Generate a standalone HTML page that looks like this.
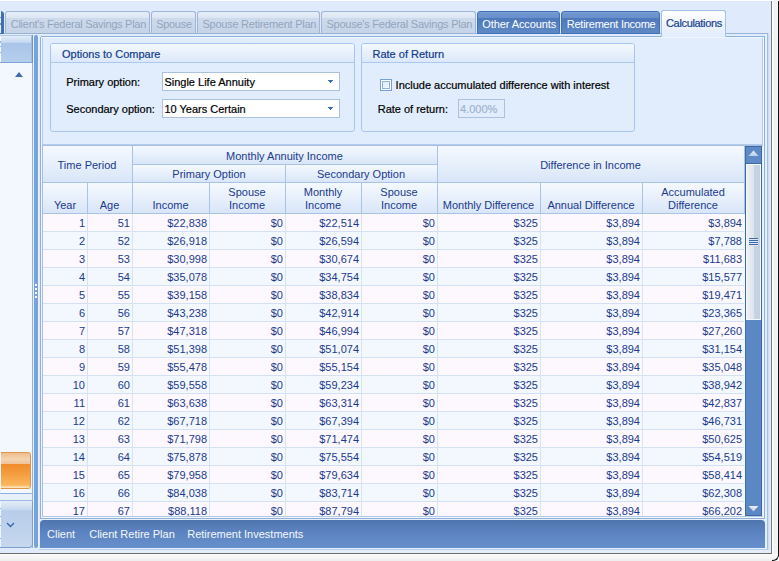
<!DOCTYPE html>
<html><head><meta charset="utf-8"><style>
html,body{margin:0;padding:0}
body{width:779px;height:561px;position:relative;overflow:hidden;background:#ffffff;font-family:"Liberation Sans",sans-serif;font-size:11px}
div{position:absolute}
svg{position:absolute}
.t{position:absolute;white-space:nowrap;line-height:13px;font-size:11px;-webkit-text-stroke-width:0.2px}
</style></head><body>
<div style="left:0px;top:0px;width:771px;height:553px;background:#dfebfc"></div>
<div style="left:0px;top:0px;width:771px;height:1px;background:#ffffff"></div>
<div style="left:771px;top:1px;width:1px;height:553px;background:#7a7a7a"></div>
<div style="left:772px;top:0px;width:6px;height:561px;background:linear-gradient(90deg,#ffffff,#ffffff 16%,#eef0f3 32%,#f1f3f5 85%,#fafafa)"></div>
<div style="left:778px;top:1px;width:1px;height:553px;background:#111"></div>
<div style="left:0px;top:553px;width:772px;height:1px;background:#6e6e6e"></div>
<div style="left:0px;top:554px;width:778px;height:7px;background:linear-gradient(#fbfbfb,#f4f4f4 60%,#eeeeee)"></div>
<div style="left:772px;top:548px;width:7px;height:13px;border-right:1.5px solid #111;border-bottom:1.5px solid #111;border-bottom-right-radius:6px;box-sizing:border-box;background:transparent"></div>
<div style="left:39px;top:34px;width:732px;height:519px;background:#e1edfc"></div>
<div style="left:39px;top:36px;width:1px;height:513px;background:#dfeafa"></div>
<div style="left:40px;top:37px;width:1px;height:482px;background:#8fb0dc"></div>
<div style="left:41px;top:36px;width:724px;height:1px;background:#8eb0de"></div>
<div style="left:40px;top:518px;width:725px;height:1px;background:#8fb0dc"></div>
<div style="left:764px;top:36px;width:1px;height:483px;background:#8fb0dc"></div>
<div style="left:41px;top:37px;width:1px;height:481px;background:#f0f6fe"></div>
<div style="left:41px;top:37px;width:723px;height:1px;background:#f0f6fe"></div>
<div style="left:41px;top:517px;width:723px;height:1px;background:#f0f6fe"></div>
<div style="left:763px;top:37px;width:1px;height:481px;background:#f0f6fe"></div>
<div style="left:40px;top:519px;width:725px;height:1px;background:#e6effa"></div>
<div style="left:765px;top:33px;width:2px;height:517px;background:#e6f0fc"></div>
<div style="left:767px;top:33px;width:1px;height:517px;background:#9fc0ea"></div>
<div style="left:768px;top:33px;width:2px;height:520px;background:linear-gradient(90deg,#c9daef,#dde9f8)"></div>
<div style="left:770px;top:33px;width:1px;height:520px;background:#e3eefb"></div>
<div style="left:39px;top:548px;width:728px;height:1px;background:#e8f0fa"></div>
<div style="left:39px;top:549px;width:729px;height:1px;background:#b5cdee"></div>
<div style="left:39px;top:550px;width:731px;height:3px;background:#e4edf8"></div>
<div style="left:0px;top:33px;width:661px;height:1px;background:#98b2d4"></div>
<div style="left:726px;top:33px;width:42px;height:1px;background:#98b2d4"></div>
<div style="left:-19px;top:11px;width:23px;height:23px;border-radius:0 3px 0 0;background:linear-gradient(90deg,#4f7bbd,#5a85c5 70%,#3f6cb0);border:1px solid #3f6cb0;box-sizing:border-box"></div>
<div style="left:0px;top:11px;width:1px;height:22px;background:#e6effb"></div>
<div style="left:0px;top:17px;width:1px;height:1px;background:#6f95cc"></div>
<div style="left:0px;top:23px;width:1px;height:2px;background:#6f95cc"></div>
<div style="left:5px;top:11px;width:145px;height:23px;box-sizing:border-box;border-radius:3px 3px 0 0;background:linear-gradient(#e6eef8,#dce5f2 28%,#cddaec 29%,#c6d4e8);border:1px solid #a0b5d3;border-bottom-color:#98b2d4;"></div>
<span class="t" style="left:10.8px;top:17.7px;color:#93a5bd;-webkit-text-stroke-width:0;letter-spacing:-0.28px">Client's Federal Savings Plan</span>
<div style="left:151px;top:11px;width:45px;height:23px;box-sizing:border-box;border-radius:3px 3px 0 0;background:linear-gradient(#e6eef8,#dce5f2 28%,#cddaec 29%,#c6d4e8);border:1px solid #a0b5d3;border-bottom-color:#98b2d4;"></div>
<span class="t" style="left:156.2px;top:17.7px;color:#93a5bd;-webkit-text-stroke-width:0;letter-spacing:-0.3px">Spouse</span>
<div style="left:197px;top:11px;width:123px;height:23px;box-sizing:border-box;border-radius:3px 3px 0 0;background:linear-gradient(#e6eef8,#dce5f2 28%,#cddaec 29%,#c6d4e8);border:1px solid #a0b5d3;border-bottom-color:#98b2d4;"></div>
<span class="t" style="left:202.5px;top:17.7px;color:#93a5bd;-webkit-text-stroke-width:0;letter-spacing:-0.25px">Spouse Retirement Plan</span>
<div style="left:321px;top:11px;width:155px;height:23px;box-sizing:border-box;border-radius:3px 3px 0 0;background:linear-gradient(#e6eef8,#dce5f2 28%,#cddaec 29%,#c6d4e8);border:1px solid #a0b5d3;border-bottom-color:#98b2d4;"></div>
<span class="t" style="left:326.4px;top:17.7px;color:#93a5bd;-webkit-text-stroke-width:0;letter-spacing:-0.23px">Spouse's Federal Savings Plan</span>
<div style="left:477px;top:11px;width:83px;height:23px;box-sizing:border-box;border-radius:3px 3px 0 0;background:linear-gradient(#86a8d9,#7097cf 5%,#6890cc 28%,#4e78ba 29%,#5f88c6);border:1px solid #4070b5;"></div>
<span class="t" style="left:482.3px;top:17.7px;color:#ffffff;-webkit-text-stroke-width:0;letter-spacing:-0.1px">Other Accounts</span>
<div style="left:561px;top:11px;width:99px;height:23px;box-sizing:border-box;border-radius:3px 3px 0 0;background:linear-gradient(#86a8d9,#7097cf 5%,#6890cc 28%,#4e78ba 29%,#5f88c6);border:1px solid #4070b5;"></div>
<span class="t" style="left:566.8px;top:17.7px;color:#ffffff;-webkit-text-stroke-width:0;letter-spacing:-0.25px">Retirement Income</span>
<div style="left:661px;top:10px;width:65px;height:27px;box-sizing:border-box;border:1px solid #a3c0e8;border-bottom:none;border-radius:3px 3px 0 0;background:linear-gradient(#ffffff,#eef4fd 50%,#e1edfc)"></div>
<span class="t" style="left:666px;top:16.8px;color:#15428b;letter-spacing:-0.33px">Calculations</span>
<div style="left:0px;top:35px;width:32px;height:513px;background:#f3f8fe"></div>
<div style="left:32px;top:35px;width:1px;height:513px;background:#8fb3e3"></div>
<div style="left:0px;top:35px;width:32px;height:1px;background:#b5c9e4"></div>
<div style="left:0px;top:36px;width:32px;height:27px;background:linear-gradient(#e4edf9,#c2d6ef 25%,#a8c4e8 26%,#b6cfec)"></div>
<div style="left:0px;top:62px;width:32px;height:1px;background:#7fa3d3"></div>
<div style="left:31px;top:36px;width:1px;height:26px;background:#9fbde3"></div>
<div style="left:32px;top:35px;width:1px;height:28px;background:#7097c8"></div>
<div style="left:15px;top:72px;width:0;height:0;border-left:4px solid transparent;border-right:4px solid transparent;border-bottom:5px solid #3c6cb4;position:absolute"></div>
<div style="left:-3px;top:452px;width:34px;height:37px;box-sizing:border-box;border:1px solid #e0954a;border-radius:3px;background:linear-gradient(#eebd8c,#f5d3b0 18%,#f0c398 31%,#f18b2b 32%,#f39a3a 55%,#fbb75c 92%,#fde3b8 98%)"></div>
<div style="left:0px;top:452px;width:1px;height:37px;background:#f6f9fe"></div>
<div style="left:0px;top:493px;width:32px;height:1px;background:#90b0e0"></div>
<div style="left:0px;top:494px;width:32px;height:7px;background:#e8f0fa"></div>
<div style="left:0px;top:500px;width:32px;height:1px;background:#9bb9e4"></div>
<div style="left:-3px;top:501px;width:36px;height:47px;box-sizing:border-box;border:1px solid #7d9fcf;border-top:none;border-radius:0 0 4px 0;background:linear-gradient(#e4edf8,#c6d8ee 20%,#b8cdea 21%,#c6d7ee)"></div>
<svg style="position:absolute;left:6px;top:522px" width="9" height="6"><path d="M1 1 L4.5 4.5 L8 1" stroke="#3565ad" stroke-width="1.35" fill="none"/></svg>
<div style="left:0px;top:36px;width:1px;height:26px;background:#f4f8fe"></div>
<div style="left:0px;top:41px;width:1px;height:2px;background:#8fb0dc"></div>
<div style="left:0px;top:46px;width:1px;height:1px;background:#8fb0dc"></div>
<div style="left:0px;top:52px;width:1px;height:1px;background:#8fb0dc"></div>
<div style="left:0px;top:501px;width:1px;height:46px;background:#eef4fc"></div>
<div style="left:0px;top:508px;width:1px;height:1px;background:#8fb0dc"></div>
<div style="left:0px;top:516px;width:1px;height:1px;background:#8fb0dc"></div>
<div style="left:0px;top:525px;width:1px;height:1px;background:#8fb0dc"></div>
<div style="left:0px;top:538px;width:1px;height:1px;background:#8fb0dc"></div>
<div style="left:33px;top:35px;width:1px;height:514px;background:#e8f0fb"></div>
<div style="left:34px;top:35px;width:4px;height:513px;background:#78a2dc;border-radius:2px"></div>
<div style="left:38px;top:35px;width:1px;height:514px;background:#eaf2fd"></div>
<div style="left:35px;top:284px;width:2px;height:2px;background:#ffffff"></div>
<div style="left:35px;top:288px;width:2px;height:2px;background:#ffffff"></div>
<div style="left:35px;top:292px;width:2px;height:2px;background:#ffffff"></div>
<div style="left:35px;top:296px;width:2px;height:2px;background:#ffffff"></div>
<div style="left:42px;top:38px;width:1px;height:106px;background:#b0cdf0"></div>
<div style="left:762px;top:38px;width:1px;height:106px;background:#b0cdf0"></div>
<div style="left:42px;top:144px;width:721px;height:1px;background:#b0cdf0"></div>
<div style="left:42px;top:145px;width:721px;height:1px;background:#a9bedb"></div>
<div style="left:50px;top:43px;width:305px;height:89px;box-sizing:border-box;border:1px solid #a6c6ef;border-radius:3px;background:#e1edfc"></div>
<div style="left:51px;top:44px;width:303px;height:18px;background:linear-gradient(#f3f8fe,#dce8fa);border-radius:2px 2px 0 0"></div>
<div style="left:51px;top:62px;width:303px;height:1px;background:#a9c9f0"></div>
<span class="t" style="left:62px;top:48px;color:#123c8c">Options to Compare</span>
<div style="left:361px;top:43px;width:274px;height:89px;box-sizing:border-box;border:1px solid #a6c6ef;border-radius:3px;background:#e1edfc"></div>
<div style="left:362px;top:44px;width:272px;height:18px;background:linear-gradient(#f3f8fe,#dce8fa);border-radius:2px 2px 0 0"></div>
<div style="left:362px;top:62px;width:272px;height:1px;background:#a9c9f0"></div>
<span class="t" style="left:372.5px;top:48px;color:#123c8c">Rate of Return</span>
<span class="t" style="left:66.2px;top:75.5px;color:#000">Primary option:</span>
<span class="t" style="left:66.2px;top:102.5px;color:#000">Secondary option:</span>
<div style="left:162px;top:72px;width:178px;height:19px;box-sizing:border-box;border:1px solid #abc1de;background:#fff"></div>
<span class="t" style="left:164.4px;top:76px;color:#000">Single Life Annuity</span>
<div style="left:328px;top:80px;width:5px;height:1px;background:#3d6cb3"></div>
<div style="left:329px;top:81px;width:3px;height:1px;background:#3d6cb3"></div>
<div style="left:330px;top:82px;width:1px;height:1px;background:#3d6cb3"></div>
<div style="left:162px;top:99px;width:178px;height:19px;box-sizing:border-box;border:1px solid #abc1de;background:#fff"></div>
<span class="t" style="left:164.4px;top:103px;color:#000">10 Years Certain</span>
<div style="left:328px;top:107px;width:5px;height:1px;background:#3d6cb3"></div>
<div style="left:329px;top:108px;width:3px;height:1px;background:#3d6cb3"></div>
<div style="left:330px;top:109px;width:1px;height:1px;background:#3d6cb3"></div>
<div style="left:380px;top:79px;width:12px;height:12px;box-sizing:border-box;border:1px solid #74a0d8;background:#ffffff"></div>
<div style="left:382px;top:81px;width:8px;height:8px;box-sizing:border-box;border:1px solid #93b2dc;background:linear-gradient(135deg,#dfe8f5,#f4f8fd)"></div>
<span class="t" style="left:395.6px;top:79px;color:#000">Include accumulated difference with interest</span>
<span class="t" style="left:377.7px;top:103px;color:#000">Rate of return:</span>
<div style="left:458px;top:99px;width:47px;height:19px;box-sizing:border-box;border:1px solid #abc1de;background:#e1edfc"></div>
<span class="t" style="left:460px;top:102.5px;color:#a0b4d0">4.000%</span>
<div style="left:42px;top:146px;width:703px;height:370px;background:#f3f8fe"></div>
<div style="left:43px;top:214px;width:701px;height:17px;background:#fcf8fd"></div>
<div style="left:43px;top:231px;width:701px;height:1px;background:#d3e1f3"></div>
<div style="left:87px;top:214px;width:1px;height:18px;background:#d6e4f5"></div>
<div style="left:132px;top:214px;width:1px;height:18px;background:#d6e4f5"></div>
<div style="left:209px;top:214px;width:1px;height:18px;background:#d6e4f5"></div>
<div style="left:285px;top:214px;width:1px;height:18px;background:#d6e4f5"></div>
<div style="left:361px;top:214px;width:1px;height:18px;background:#d6e4f5"></div>
<div style="left:437px;top:214px;width:1px;height:18px;background:#d6e4f5"></div>
<div style="left:540px;top:214px;width:1px;height:18px;background:#d6e4f5"></div>
<div style="left:642px;top:214px;width:1px;height:18px;background:#d6e4f5"></div>
<span class="t" style="right:694px;top:216.9px;color:#1b3a8e;-webkit-text-stroke-width:0">1</span>
<span class="t" style="right:649px;top:216.9px;color:#1b3a8e;-webkit-text-stroke-width:0">51</span>
<span class="t" style="right:572px;top:216.9px;color:#1b3a8e;-webkit-text-stroke-width:0">$22,838</span>
<span class="t" style="right:496px;top:216.9px;color:#1b3a8e;-webkit-text-stroke-width:0">$0</span>
<span class="t" style="right:420px;top:216.9px;color:#1b3a8e;-webkit-text-stroke-width:0">$22,514</span>
<span class="t" style="right:344px;top:216.9px;color:#1b3a8e;-webkit-text-stroke-width:0">$0</span>
<span class="t" style="right:241px;top:216.9px;color:#1b3a8e;-webkit-text-stroke-width:0">$325</span>
<span class="t" style="right:139px;top:216.9px;color:#1b3a8e;-webkit-text-stroke-width:0">$3,894</span>
<span class="t" style="right:37px;top:216.9px;color:#1b3a8e;-webkit-text-stroke-width:0">$3,894</span>
<div style="left:43px;top:232px;width:701px;height:17px;background:#f3f8fe"></div>
<div style="left:43px;top:249px;width:701px;height:1px;background:#d3e1f3"></div>
<div style="left:87px;top:232px;width:1px;height:18px;background:#d6e4f5"></div>
<div style="left:132px;top:232px;width:1px;height:18px;background:#d6e4f5"></div>
<div style="left:209px;top:232px;width:1px;height:18px;background:#d6e4f5"></div>
<div style="left:285px;top:232px;width:1px;height:18px;background:#d6e4f5"></div>
<div style="left:361px;top:232px;width:1px;height:18px;background:#d6e4f5"></div>
<div style="left:437px;top:232px;width:1px;height:18px;background:#d6e4f5"></div>
<div style="left:540px;top:232px;width:1px;height:18px;background:#d6e4f5"></div>
<div style="left:642px;top:232px;width:1px;height:18px;background:#d6e4f5"></div>
<span class="t" style="right:694px;top:234.9px;color:#1b3a8e;-webkit-text-stroke-width:0">2</span>
<span class="t" style="right:649px;top:234.9px;color:#1b3a8e;-webkit-text-stroke-width:0">52</span>
<span class="t" style="right:572px;top:234.9px;color:#1b3a8e;-webkit-text-stroke-width:0">$26,918</span>
<span class="t" style="right:496px;top:234.9px;color:#1b3a8e;-webkit-text-stroke-width:0">$0</span>
<span class="t" style="right:420px;top:234.9px;color:#1b3a8e;-webkit-text-stroke-width:0">$26,594</span>
<span class="t" style="right:344px;top:234.9px;color:#1b3a8e;-webkit-text-stroke-width:0">$0</span>
<span class="t" style="right:241px;top:234.9px;color:#1b3a8e;-webkit-text-stroke-width:0">$325</span>
<span class="t" style="right:139px;top:234.9px;color:#1b3a8e;-webkit-text-stroke-width:0">$3,894</span>
<span class="t" style="right:37px;top:234.9px;color:#1b3a8e;-webkit-text-stroke-width:0">$7,788</span>
<div style="left:43px;top:250px;width:701px;height:17px;background:#fcf8fd"></div>
<div style="left:43px;top:267px;width:701px;height:1px;background:#d3e1f3"></div>
<div style="left:87px;top:250px;width:1px;height:18px;background:#d6e4f5"></div>
<div style="left:132px;top:250px;width:1px;height:18px;background:#d6e4f5"></div>
<div style="left:209px;top:250px;width:1px;height:18px;background:#d6e4f5"></div>
<div style="left:285px;top:250px;width:1px;height:18px;background:#d6e4f5"></div>
<div style="left:361px;top:250px;width:1px;height:18px;background:#d6e4f5"></div>
<div style="left:437px;top:250px;width:1px;height:18px;background:#d6e4f5"></div>
<div style="left:540px;top:250px;width:1px;height:18px;background:#d6e4f5"></div>
<div style="left:642px;top:250px;width:1px;height:18px;background:#d6e4f5"></div>
<span class="t" style="right:694px;top:252.89999999999998px;color:#1b3a8e;-webkit-text-stroke-width:0">3</span>
<span class="t" style="right:649px;top:252.89999999999998px;color:#1b3a8e;-webkit-text-stroke-width:0">53</span>
<span class="t" style="right:572px;top:252.89999999999998px;color:#1b3a8e;-webkit-text-stroke-width:0">$30,998</span>
<span class="t" style="right:496px;top:252.89999999999998px;color:#1b3a8e;-webkit-text-stroke-width:0">$0</span>
<span class="t" style="right:420px;top:252.89999999999998px;color:#1b3a8e;-webkit-text-stroke-width:0">$30,674</span>
<span class="t" style="right:344px;top:252.89999999999998px;color:#1b3a8e;-webkit-text-stroke-width:0">$0</span>
<span class="t" style="right:241px;top:252.89999999999998px;color:#1b3a8e;-webkit-text-stroke-width:0">$325</span>
<span class="t" style="right:139px;top:252.89999999999998px;color:#1b3a8e;-webkit-text-stroke-width:0">$3,894</span>
<span class="t" style="right:37px;top:252.89999999999998px;color:#1b3a8e;-webkit-text-stroke-width:0">$11,683</span>
<div style="left:43px;top:268px;width:701px;height:17px;background:#f3f8fe"></div>
<div style="left:43px;top:285px;width:701px;height:1px;background:#d3e1f3"></div>
<div style="left:87px;top:268px;width:1px;height:18px;background:#d6e4f5"></div>
<div style="left:132px;top:268px;width:1px;height:18px;background:#d6e4f5"></div>
<div style="left:209px;top:268px;width:1px;height:18px;background:#d6e4f5"></div>
<div style="left:285px;top:268px;width:1px;height:18px;background:#d6e4f5"></div>
<div style="left:361px;top:268px;width:1px;height:18px;background:#d6e4f5"></div>
<div style="left:437px;top:268px;width:1px;height:18px;background:#d6e4f5"></div>
<div style="left:540px;top:268px;width:1px;height:18px;background:#d6e4f5"></div>
<div style="left:642px;top:268px;width:1px;height:18px;background:#d6e4f5"></div>
<span class="t" style="right:694px;top:270.9px;color:#1b3a8e;-webkit-text-stroke-width:0">4</span>
<span class="t" style="right:649px;top:270.9px;color:#1b3a8e;-webkit-text-stroke-width:0">54</span>
<span class="t" style="right:572px;top:270.9px;color:#1b3a8e;-webkit-text-stroke-width:0">$35,078</span>
<span class="t" style="right:496px;top:270.9px;color:#1b3a8e;-webkit-text-stroke-width:0">$0</span>
<span class="t" style="right:420px;top:270.9px;color:#1b3a8e;-webkit-text-stroke-width:0">$34,754</span>
<span class="t" style="right:344px;top:270.9px;color:#1b3a8e;-webkit-text-stroke-width:0">$0</span>
<span class="t" style="right:241px;top:270.9px;color:#1b3a8e;-webkit-text-stroke-width:0">$325</span>
<span class="t" style="right:139px;top:270.9px;color:#1b3a8e;-webkit-text-stroke-width:0">$3,894</span>
<span class="t" style="right:37px;top:270.9px;color:#1b3a8e;-webkit-text-stroke-width:0">$15,577</span>
<div style="left:43px;top:286px;width:701px;height:17px;background:#fcf8fd"></div>
<div style="left:43px;top:303px;width:701px;height:1px;background:#d3e1f3"></div>
<div style="left:87px;top:286px;width:1px;height:18px;background:#d6e4f5"></div>
<div style="left:132px;top:286px;width:1px;height:18px;background:#d6e4f5"></div>
<div style="left:209px;top:286px;width:1px;height:18px;background:#d6e4f5"></div>
<div style="left:285px;top:286px;width:1px;height:18px;background:#d6e4f5"></div>
<div style="left:361px;top:286px;width:1px;height:18px;background:#d6e4f5"></div>
<div style="left:437px;top:286px;width:1px;height:18px;background:#d6e4f5"></div>
<div style="left:540px;top:286px;width:1px;height:18px;background:#d6e4f5"></div>
<div style="left:642px;top:286px;width:1px;height:18px;background:#d6e4f5"></div>
<span class="t" style="right:694px;top:288.9px;color:#1b3a8e;-webkit-text-stroke-width:0">5</span>
<span class="t" style="right:649px;top:288.9px;color:#1b3a8e;-webkit-text-stroke-width:0">55</span>
<span class="t" style="right:572px;top:288.9px;color:#1b3a8e;-webkit-text-stroke-width:0">$39,158</span>
<span class="t" style="right:496px;top:288.9px;color:#1b3a8e;-webkit-text-stroke-width:0">$0</span>
<span class="t" style="right:420px;top:288.9px;color:#1b3a8e;-webkit-text-stroke-width:0">$38,834</span>
<span class="t" style="right:344px;top:288.9px;color:#1b3a8e;-webkit-text-stroke-width:0">$0</span>
<span class="t" style="right:241px;top:288.9px;color:#1b3a8e;-webkit-text-stroke-width:0">$325</span>
<span class="t" style="right:139px;top:288.9px;color:#1b3a8e;-webkit-text-stroke-width:0">$3,894</span>
<span class="t" style="right:37px;top:288.9px;color:#1b3a8e;-webkit-text-stroke-width:0">$19,471</span>
<div style="left:43px;top:304px;width:701px;height:17px;background:#f3f8fe"></div>
<div style="left:43px;top:321px;width:701px;height:1px;background:#d3e1f3"></div>
<div style="left:87px;top:304px;width:1px;height:18px;background:#d6e4f5"></div>
<div style="left:132px;top:304px;width:1px;height:18px;background:#d6e4f5"></div>
<div style="left:209px;top:304px;width:1px;height:18px;background:#d6e4f5"></div>
<div style="left:285px;top:304px;width:1px;height:18px;background:#d6e4f5"></div>
<div style="left:361px;top:304px;width:1px;height:18px;background:#d6e4f5"></div>
<div style="left:437px;top:304px;width:1px;height:18px;background:#d6e4f5"></div>
<div style="left:540px;top:304px;width:1px;height:18px;background:#d6e4f5"></div>
<div style="left:642px;top:304px;width:1px;height:18px;background:#d6e4f5"></div>
<span class="t" style="right:694px;top:306.9px;color:#1b3a8e;-webkit-text-stroke-width:0">6</span>
<span class="t" style="right:649px;top:306.9px;color:#1b3a8e;-webkit-text-stroke-width:0">56</span>
<span class="t" style="right:572px;top:306.9px;color:#1b3a8e;-webkit-text-stroke-width:0">$43,238</span>
<span class="t" style="right:496px;top:306.9px;color:#1b3a8e;-webkit-text-stroke-width:0">$0</span>
<span class="t" style="right:420px;top:306.9px;color:#1b3a8e;-webkit-text-stroke-width:0">$42,914</span>
<span class="t" style="right:344px;top:306.9px;color:#1b3a8e;-webkit-text-stroke-width:0">$0</span>
<span class="t" style="right:241px;top:306.9px;color:#1b3a8e;-webkit-text-stroke-width:0">$325</span>
<span class="t" style="right:139px;top:306.9px;color:#1b3a8e;-webkit-text-stroke-width:0">$3,894</span>
<span class="t" style="right:37px;top:306.9px;color:#1b3a8e;-webkit-text-stroke-width:0">$23,365</span>
<div style="left:43px;top:322px;width:701px;height:17px;background:#fcf8fd"></div>
<div style="left:43px;top:339px;width:701px;height:1px;background:#d3e1f3"></div>
<div style="left:87px;top:322px;width:1px;height:18px;background:#d6e4f5"></div>
<div style="left:132px;top:322px;width:1px;height:18px;background:#d6e4f5"></div>
<div style="left:209px;top:322px;width:1px;height:18px;background:#d6e4f5"></div>
<div style="left:285px;top:322px;width:1px;height:18px;background:#d6e4f5"></div>
<div style="left:361px;top:322px;width:1px;height:18px;background:#d6e4f5"></div>
<div style="left:437px;top:322px;width:1px;height:18px;background:#d6e4f5"></div>
<div style="left:540px;top:322px;width:1px;height:18px;background:#d6e4f5"></div>
<div style="left:642px;top:322px;width:1px;height:18px;background:#d6e4f5"></div>
<span class="t" style="right:694px;top:324.9px;color:#1b3a8e;-webkit-text-stroke-width:0">7</span>
<span class="t" style="right:649px;top:324.9px;color:#1b3a8e;-webkit-text-stroke-width:0">57</span>
<span class="t" style="right:572px;top:324.9px;color:#1b3a8e;-webkit-text-stroke-width:0">$47,318</span>
<span class="t" style="right:496px;top:324.9px;color:#1b3a8e;-webkit-text-stroke-width:0">$0</span>
<span class="t" style="right:420px;top:324.9px;color:#1b3a8e;-webkit-text-stroke-width:0">$46,994</span>
<span class="t" style="right:344px;top:324.9px;color:#1b3a8e;-webkit-text-stroke-width:0">$0</span>
<span class="t" style="right:241px;top:324.9px;color:#1b3a8e;-webkit-text-stroke-width:0">$325</span>
<span class="t" style="right:139px;top:324.9px;color:#1b3a8e;-webkit-text-stroke-width:0">$3,894</span>
<span class="t" style="right:37px;top:324.9px;color:#1b3a8e;-webkit-text-stroke-width:0">$27,260</span>
<div style="left:43px;top:340px;width:701px;height:17px;background:#f3f8fe"></div>
<div style="left:43px;top:357px;width:701px;height:1px;background:#d3e1f3"></div>
<div style="left:87px;top:340px;width:1px;height:18px;background:#d6e4f5"></div>
<div style="left:132px;top:340px;width:1px;height:18px;background:#d6e4f5"></div>
<div style="left:209px;top:340px;width:1px;height:18px;background:#d6e4f5"></div>
<div style="left:285px;top:340px;width:1px;height:18px;background:#d6e4f5"></div>
<div style="left:361px;top:340px;width:1px;height:18px;background:#d6e4f5"></div>
<div style="left:437px;top:340px;width:1px;height:18px;background:#d6e4f5"></div>
<div style="left:540px;top:340px;width:1px;height:18px;background:#d6e4f5"></div>
<div style="left:642px;top:340px;width:1px;height:18px;background:#d6e4f5"></div>
<span class="t" style="right:694px;top:342.9px;color:#1b3a8e;-webkit-text-stroke-width:0">8</span>
<span class="t" style="right:649px;top:342.9px;color:#1b3a8e;-webkit-text-stroke-width:0">58</span>
<span class="t" style="right:572px;top:342.9px;color:#1b3a8e;-webkit-text-stroke-width:0">$51,398</span>
<span class="t" style="right:496px;top:342.9px;color:#1b3a8e;-webkit-text-stroke-width:0">$0</span>
<span class="t" style="right:420px;top:342.9px;color:#1b3a8e;-webkit-text-stroke-width:0">$51,074</span>
<span class="t" style="right:344px;top:342.9px;color:#1b3a8e;-webkit-text-stroke-width:0">$0</span>
<span class="t" style="right:241px;top:342.9px;color:#1b3a8e;-webkit-text-stroke-width:0">$325</span>
<span class="t" style="right:139px;top:342.9px;color:#1b3a8e;-webkit-text-stroke-width:0">$3,894</span>
<span class="t" style="right:37px;top:342.9px;color:#1b3a8e;-webkit-text-stroke-width:0">$31,154</span>
<div style="left:43px;top:358px;width:701px;height:17px;background:#fcf8fd"></div>
<div style="left:43px;top:375px;width:701px;height:1px;background:#d3e1f3"></div>
<div style="left:87px;top:358px;width:1px;height:18px;background:#d6e4f5"></div>
<div style="left:132px;top:358px;width:1px;height:18px;background:#d6e4f5"></div>
<div style="left:209px;top:358px;width:1px;height:18px;background:#d6e4f5"></div>
<div style="left:285px;top:358px;width:1px;height:18px;background:#d6e4f5"></div>
<div style="left:361px;top:358px;width:1px;height:18px;background:#d6e4f5"></div>
<div style="left:437px;top:358px;width:1px;height:18px;background:#d6e4f5"></div>
<div style="left:540px;top:358px;width:1px;height:18px;background:#d6e4f5"></div>
<div style="left:642px;top:358px;width:1px;height:18px;background:#d6e4f5"></div>
<span class="t" style="right:694px;top:360.9px;color:#1b3a8e;-webkit-text-stroke-width:0">9</span>
<span class="t" style="right:649px;top:360.9px;color:#1b3a8e;-webkit-text-stroke-width:0">59</span>
<span class="t" style="right:572px;top:360.9px;color:#1b3a8e;-webkit-text-stroke-width:0">$55,478</span>
<span class="t" style="right:496px;top:360.9px;color:#1b3a8e;-webkit-text-stroke-width:0">$0</span>
<span class="t" style="right:420px;top:360.9px;color:#1b3a8e;-webkit-text-stroke-width:0">$55,154</span>
<span class="t" style="right:344px;top:360.9px;color:#1b3a8e;-webkit-text-stroke-width:0">$0</span>
<span class="t" style="right:241px;top:360.9px;color:#1b3a8e;-webkit-text-stroke-width:0">$325</span>
<span class="t" style="right:139px;top:360.9px;color:#1b3a8e;-webkit-text-stroke-width:0">$3,894</span>
<span class="t" style="right:37px;top:360.9px;color:#1b3a8e;-webkit-text-stroke-width:0">$35,048</span>
<div style="left:43px;top:376px;width:701px;height:17px;background:#f3f8fe"></div>
<div style="left:43px;top:393px;width:701px;height:1px;background:#d3e1f3"></div>
<div style="left:87px;top:376px;width:1px;height:18px;background:#d6e4f5"></div>
<div style="left:132px;top:376px;width:1px;height:18px;background:#d6e4f5"></div>
<div style="left:209px;top:376px;width:1px;height:18px;background:#d6e4f5"></div>
<div style="left:285px;top:376px;width:1px;height:18px;background:#d6e4f5"></div>
<div style="left:361px;top:376px;width:1px;height:18px;background:#d6e4f5"></div>
<div style="left:437px;top:376px;width:1px;height:18px;background:#d6e4f5"></div>
<div style="left:540px;top:376px;width:1px;height:18px;background:#d6e4f5"></div>
<div style="left:642px;top:376px;width:1px;height:18px;background:#d6e4f5"></div>
<span class="t" style="right:694px;top:378.9px;color:#1b3a8e;-webkit-text-stroke-width:0">10</span>
<span class="t" style="right:649px;top:378.9px;color:#1b3a8e;-webkit-text-stroke-width:0">60</span>
<span class="t" style="right:572px;top:378.9px;color:#1b3a8e;-webkit-text-stroke-width:0">$59,558</span>
<span class="t" style="right:496px;top:378.9px;color:#1b3a8e;-webkit-text-stroke-width:0">$0</span>
<span class="t" style="right:420px;top:378.9px;color:#1b3a8e;-webkit-text-stroke-width:0">$59,234</span>
<span class="t" style="right:344px;top:378.9px;color:#1b3a8e;-webkit-text-stroke-width:0">$0</span>
<span class="t" style="right:241px;top:378.9px;color:#1b3a8e;-webkit-text-stroke-width:0">$325</span>
<span class="t" style="right:139px;top:378.9px;color:#1b3a8e;-webkit-text-stroke-width:0">$3,894</span>
<span class="t" style="right:37px;top:378.9px;color:#1b3a8e;-webkit-text-stroke-width:0">$38,942</span>
<div style="left:43px;top:394px;width:701px;height:17px;background:#fcf8fd"></div>
<div style="left:43px;top:411px;width:701px;height:1px;background:#d3e1f3"></div>
<div style="left:87px;top:394px;width:1px;height:18px;background:#d6e4f5"></div>
<div style="left:132px;top:394px;width:1px;height:18px;background:#d6e4f5"></div>
<div style="left:209px;top:394px;width:1px;height:18px;background:#d6e4f5"></div>
<div style="left:285px;top:394px;width:1px;height:18px;background:#d6e4f5"></div>
<div style="left:361px;top:394px;width:1px;height:18px;background:#d6e4f5"></div>
<div style="left:437px;top:394px;width:1px;height:18px;background:#d6e4f5"></div>
<div style="left:540px;top:394px;width:1px;height:18px;background:#d6e4f5"></div>
<div style="left:642px;top:394px;width:1px;height:18px;background:#d6e4f5"></div>
<span class="t" style="right:694px;top:396.9px;color:#1b3a8e;-webkit-text-stroke-width:0">11</span>
<span class="t" style="right:649px;top:396.9px;color:#1b3a8e;-webkit-text-stroke-width:0">61</span>
<span class="t" style="right:572px;top:396.9px;color:#1b3a8e;-webkit-text-stroke-width:0">$63,638</span>
<span class="t" style="right:496px;top:396.9px;color:#1b3a8e;-webkit-text-stroke-width:0">$0</span>
<span class="t" style="right:420px;top:396.9px;color:#1b3a8e;-webkit-text-stroke-width:0">$63,314</span>
<span class="t" style="right:344px;top:396.9px;color:#1b3a8e;-webkit-text-stroke-width:0">$0</span>
<span class="t" style="right:241px;top:396.9px;color:#1b3a8e;-webkit-text-stroke-width:0">$325</span>
<span class="t" style="right:139px;top:396.9px;color:#1b3a8e;-webkit-text-stroke-width:0">$3,894</span>
<span class="t" style="right:37px;top:396.9px;color:#1b3a8e;-webkit-text-stroke-width:0">$42,837</span>
<div style="left:43px;top:412px;width:701px;height:17px;background:#f3f8fe"></div>
<div style="left:43px;top:429px;width:701px;height:1px;background:#d3e1f3"></div>
<div style="left:87px;top:412px;width:1px;height:18px;background:#d6e4f5"></div>
<div style="left:132px;top:412px;width:1px;height:18px;background:#d6e4f5"></div>
<div style="left:209px;top:412px;width:1px;height:18px;background:#d6e4f5"></div>
<div style="left:285px;top:412px;width:1px;height:18px;background:#d6e4f5"></div>
<div style="left:361px;top:412px;width:1px;height:18px;background:#d6e4f5"></div>
<div style="left:437px;top:412px;width:1px;height:18px;background:#d6e4f5"></div>
<div style="left:540px;top:412px;width:1px;height:18px;background:#d6e4f5"></div>
<div style="left:642px;top:412px;width:1px;height:18px;background:#d6e4f5"></div>
<span class="t" style="right:694px;top:414.9px;color:#1b3a8e;-webkit-text-stroke-width:0">12</span>
<span class="t" style="right:649px;top:414.9px;color:#1b3a8e;-webkit-text-stroke-width:0">62</span>
<span class="t" style="right:572px;top:414.9px;color:#1b3a8e;-webkit-text-stroke-width:0">$67,718</span>
<span class="t" style="right:496px;top:414.9px;color:#1b3a8e;-webkit-text-stroke-width:0">$0</span>
<span class="t" style="right:420px;top:414.9px;color:#1b3a8e;-webkit-text-stroke-width:0">$67,394</span>
<span class="t" style="right:344px;top:414.9px;color:#1b3a8e;-webkit-text-stroke-width:0">$0</span>
<span class="t" style="right:241px;top:414.9px;color:#1b3a8e;-webkit-text-stroke-width:0">$325</span>
<span class="t" style="right:139px;top:414.9px;color:#1b3a8e;-webkit-text-stroke-width:0">$3,894</span>
<span class="t" style="right:37px;top:414.9px;color:#1b3a8e;-webkit-text-stroke-width:0">$46,731</span>
<div style="left:43px;top:430px;width:701px;height:17px;background:#fcf8fd"></div>
<div style="left:43px;top:447px;width:701px;height:1px;background:#d3e1f3"></div>
<div style="left:87px;top:430px;width:1px;height:18px;background:#d6e4f5"></div>
<div style="left:132px;top:430px;width:1px;height:18px;background:#d6e4f5"></div>
<div style="left:209px;top:430px;width:1px;height:18px;background:#d6e4f5"></div>
<div style="left:285px;top:430px;width:1px;height:18px;background:#d6e4f5"></div>
<div style="left:361px;top:430px;width:1px;height:18px;background:#d6e4f5"></div>
<div style="left:437px;top:430px;width:1px;height:18px;background:#d6e4f5"></div>
<div style="left:540px;top:430px;width:1px;height:18px;background:#d6e4f5"></div>
<div style="left:642px;top:430px;width:1px;height:18px;background:#d6e4f5"></div>
<span class="t" style="right:694px;top:432.9px;color:#1b3a8e;-webkit-text-stroke-width:0">13</span>
<span class="t" style="right:649px;top:432.9px;color:#1b3a8e;-webkit-text-stroke-width:0">63</span>
<span class="t" style="right:572px;top:432.9px;color:#1b3a8e;-webkit-text-stroke-width:0">$71,798</span>
<span class="t" style="right:496px;top:432.9px;color:#1b3a8e;-webkit-text-stroke-width:0">$0</span>
<span class="t" style="right:420px;top:432.9px;color:#1b3a8e;-webkit-text-stroke-width:0">$71,474</span>
<span class="t" style="right:344px;top:432.9px;color:#1b3a8e;-webkit-text-stroke-width:0">$0</span>
<span class="t" style="right:241px;top:432.9px;color:#1b3a8e;-webkit-text-stroke-width:0">$325</span>
<span class="t" style="right:139px;top:432.9px;color:#1b3a8e;-webkit-text-stroke-width:0">$3,894</span>
<span class="t" style="right:37px;top:432.9px;color:#1b3a8e;-webkit-text-stroke-width:0">$50,625</span>
<div style="left:43px;top:448px;width:701px;height:17px;background:#f3f8fe"></div>
<div style="left:43px;top:465px;width:701px;height:1px;background:#d3e1f3"></div>
<div style="left:87px;top:448px;width:1px;height:18px;background:#d6e4f5"></div>
<div style="left:132px;top:448px;width:1px;height:18px;background:#d6e4f5"></div>
<div style="left:209px;top:448px;width:1px;height:18px;background:#d6e4f5"></div>
<div style="left:285px;top:448px;width:1px;height:18px;background:#d6e4f5"></div>
<div style="left:361px;top:448px;width:1px;height:18px;background:#d6e4f5"></div>
<div style="left:437px;top:448px;width:1px;height:18px;background:#d6e4f5"></div>
<div style="left:540px;top:448px;width:1px;height:18px;background:#d6e4f5"></div>
<div style="left:642px;top:448px;width:1px;height:18px;background:#d6e4f5"></div>
<span class="t" style="right:694px;top:450.9px;color:#1b3a8e;-webkit-text-stroke-width:0">14</span>
<span class="t" style="right:649px;top:450.9px;color:#1b3a8e;-webkit-text-stroke-width:0">64</span>
<span class="t" style="right:572px;top:450.9px;color:#1b3a8e;-webkit-text-stroke-width:0">$75,878</span>
<span class="t" style="right:496px;top:450.9px;color:#1b3a8e;-webkit-text-stroke-width:0">$0</span>
<span class="t" style="right:420px;top:450.9px;color:#1b3a8e;-webkit-text-stroke-width:0">$75,554</span>
<span class="t" style="right:344px;top:450.9px;color:#1b3a8e;-webkit-text-stroke-width:0">$0</span>
<span class="t" style="right:241px;top:450.9px;color:#1b3a8e;-webkit-text-stroke-width:0">$325</span>
<span class="t" style="right:139px;top:450.9px;color:#1b3a8e;-webkit-text-stroke-width:0">$3,894</span>
<span class="t" style="right:37px;top:450.9px;color:#1b3a8e;-webkit-text-stroke-width:0">$54,519</span>
<div style="left:43px;top:466px;width:701px;height:17px;background:#fcf8fd"></div>
<div style="left:43px;top:483px;width:701px;height:1px;background:#d3e1f3"></div>
<div style="left:87px;top:466px;width:1px;height:18px;background:#d6e4f5"></div>
<div style="left:132px;top:466px;width:1px;height:18px;background:#d6e4f5"></div>
<div style="left:209px;top:466px;width:1px;height:18px;background:#d6e4f5"></div>
<div style="left:285px;top:466px;width:1px;height:18px;background:#d6e4f5"></div>
<div style="left:361px;top:466px;width:1px;height:18px;background:#d6e4f5"></div>
<div style="left:437px;top:466px;width:1px;height:18px;background:#d6e4f5"></div>
<div style="left:540px;top:466px;width:1px;height:18px;background:#d6e4f5"></div>
<div style="left:642px;top:466px;width:1px;height:18px;background:#d6e4f5"></div>
<span class="t" style="right:694px;top:468.9px;color:#1b3a8e;-webkit-text-stroke-width:0">15</span>
<span class="t" style="right:649px;top:468.9px;color:#1b3a8e;-webkit-text-stroke-width:0">65</span>
<span class="t" style="right:572px;top:468.9px;color:#1b3a8e;-webkit-text-stroke-width:0">$79,958</span>
<span class="t" style="right:496px;top:468.9px;color:#1b3a8e;-webkit-text-stroke-width:0">$0</span>
<span class="t" style="right:420px;top:468.9px;color:#1b3a8e;-webkit-text-stroke-width:0">$79,634</span>
<span class="t" style="right:344px;top:468.9px;color:#1b3a8e;-webkit-text-stroke-width:0">$0</span>
<span class="t" style="right:241px;top:468.9px;color:#1b3a8e;-webkit-text-stroke-width:0">$325</span>
<span class="t" style="right:139px;top:468.9px;color:#1b3a8e;-webkit-text-stroke-width:0">$3,894</span>
<span class="t" style="right:37px;top:468.9px;color:#1b3a8e;-webkit-text-stroke-width:0">$58,414</span>
<div style="left:43px;top:484px;width:701px;height:17px;background:#f3f8fe"></div>
<div style="left:43px;top:501px;width:701px;height:1px;background:#d3e1f3"></div>
<div style="left:87px;top:484px;width:1px;height:18px;background:#d6e4f5"></div>
<div style="left:132px;top:484px;width:1px;height:18px;background:#d6e4f5"></div>
<div style="left:209px;top:484px;width:1px;height:18px;background:#d6e4f5"></div>
<div style="left:285px;top:484px;width:1px;height:18px;background:#d6e4f5"></div>
<div style="left:361px;top:484px;width:1px;height:18px;background:#d6e4f5"></div>
<div style="left:437px;top:484px;width:1px;height:18px;background:#d6e4f5"></div>
<div style="left:540px;top:484px;width:1px;height:18px;background:#d6e4f5"></div>
<div style="left:642px;top:484px;width:1px;height:18px;background:#d6e4f5"></div>
<span class="t" style="right:694px;top:486.9px;color:#1b3a8e;-webkit-text-stroke-width:0">16</span>
<span class="t" style="right:649px;top:486.9px;color:#1b3a8e;-webkit-text-stroke-width:0">66</span>
<span class="t" style="right:572px;top:486.9px;color:#1b3a8e;-webkit-text-stroke-width:0">$84,038</span>
<span class="t" style="right:496px;top:486.9px;color:#1b3a8e;-webkit-text-stroke-width:0">$0</span>
<span class="t" style="right:420px;top:486.9px;color:#1b3a8e;-webkit-text-stroke-width:0">$83,714</span>
<span class="t" style="right:344px;top:486.9px;color:#1b3a8e;-webkit-text-stroke-width:0">$0</span>
<span class="t" style="right:241px;top:486.9px;color:#1b3a8e;-webkit-text-stroke-width:0">$325</span>
<span class="t" style="right:139px;top:486.9px;color:#1b3a8e;-webkit-text-stroke-width:0">$3,894</span>
<span class="t" style="right:37px;top:486.9px;color:#1b3a8e;-webkit-text-stroke-width:0">$62,308</span>
<div style="left:43px;top:502px;width:701px;height:14px;background:#fcf8fd"></div>
<div style="left:87px;top:502px;width:1px;height:14px;background:#d6e4f5"></div>
<div style="left:132px;top:502px;width:1px;height:14px;background:#d6e4f5"></div>
<div style="left:209px;top:502px;width:1px;height:14px;background:#d6e4f5"></div>
<div style="left:285px;top:502px;width:1px;height:14px;background:#d6e4f5"></div>
<div style="left:361px;top:502px;width:1px;height:14px;background:#d6e4f5"></div>
<div style="left:437px;top:502px;width:1px;height:14px;background:#d6e4f5"></div>
<div style="left:540px;top:502px;width:1px;height:14px;background:#d6e4f5"></div>
<div style="left:642px;top:502px;width:1px;height:14px;background:#d6e4f5"></div>
<span class="t" style="right:694px;top:504.9px;color:#1b3a8e;-webkit-text-stroke-width:0">17</span>
<span class="t" style="right:649px;top:504.9px;color:#1b3a8e;-webkit-text-stroke-width:0">67</span>
<span class="t" style="right:572px;top:504.9px;color:#1b3a8e;-webkit-text-stroke-width:0">$88,118</span>
<span class="t" style="right:496px;top:504.9px;color:#1b3a8e;-webkit-text-stroke-width:0">$0</span>
<span class="t" style="right:420px;top:504.9px;color:#1b3a8e;-webkit-text-stroke-width:0">$87,794</span>
<span class="t" style="right:344px;top:504.9px;color:#1b3a8e;-webkit-text-stroke-width:0">$0</span>
<span class="t" style="right:241px;top:504.9px;color:#1b3a8e;-webkit-text-stroke-width:0">$325</span>
<span class="t" style="right:139px;top:504.9px;color:#1b3a8e;-webkit-text-stroke-width:0">$3,894</span>
<span class="t" style="right:37px;top:504.9px;color:#1b3a8e;-webkit-text-stroke-width:0">$66,202</span>
<div style="left:42px;top:146px;width:703px;height:67px;background:#e6effb"></div>
<div style="left:43px;top:146px;width:89px;height:36px;background:linear-gradient(#f5f9fe,#d9e6f8)"></div>
<div style="left:437px;top:146px;width:308px;height:36px;background:linear-gradient(#f5f9fe,#d9e6f8)"></div>
<div style="left:132px;top:146px;width:305px;height:18px;background:linear-gradient(#f5f9fe,#d9e6f8)"></div>
<div style="left:132px;top:165px;width:305px;height:17px;background:linear-gradient(#f5f9fe,#d9e6f8)"></div>
<div style="left:43px;top:183px;width:702px;height:30px;background:linear-gradient(#f5f9fe,#d9e6f8)"></div>
<div style="left:132px;top:164px;width:305px;height:1px;background:#a9c3e5"></div>
<div style="left:42px;top:182px;width:703px;height:1px;background:#a9c3e5"></div>
<div style="left:42px;top:213px;width:703px;height:1px;background:#a9c3e5"></div>
<div style="left:42px;top:146px;width:1px;height:370px;background:#a9bedb"></div>
<div style="left:42px;top:516px;width:721px;height:1px;background:#b5c8e2"></div>
<div style="left:762px;top:146px;width:1px;height:370px;background:#e6f0fc"></div>
<div style="left:132px;top:146px;width:1px;height:67px;background:#a9c3e5"></div>
<div style="left:437px;top:146px;width:1px;height:67px;background:#a9c3e5"></div>
<div style="left:285px;top:165px;width:1px;height:48px;background:#a9c3e5"></div>
<div style="left:87px;top:183px;width:1px;height:30px;background:#a9c3e5"></div>
<div style="left:209px;top:183px;width:1px;height:30px;background:#a9c3e5"></div>
<div style="left:361px;top:183px;width:1px;height:30px;background:#a9c3e5"></div>
<div style="left:540px;top:183px;width:1px;height:30px;background:#a9c3e5"></div>
<div style="left:642px;top:183px;width:1px;height:30px;background:#a9c3e5"></div>
<div style="left:744px;top:146px;width:1px;height:67px;background:#a9c3e5"></div>
<span class="t" style="left:-13.0px;width:200px;text-align:center;top:158.9px;color:#1b3a8e;-webkit-text-stroke-width:0">Time Period</span>
<span class="t" style="left:184.5px;width:200px;text-align:center;top:150px;color:#1b3a8e;-webkit-text-stroke-width:0">Monthly Annuity Income</span>
<span class="t" style="left:109.0px;width:200px;text-align:center;top:168.2px;color:#1b3a8e;-webkit-text-stroke-width:0">Primary Option</span>
<span class="t" style="left:261.0px;width:200px;text-align:center;top:168.2px;color:#1b3a8e;-webkit-text-stroke-width:0">Secondary Option</span>
<span class="t" style="left:490.5px;width:200px;text-align:center;top:158.8px;color:#1b3a8e;-webkit-text-stroke-width:0">Difference in Income</span>
<span class="t" style="left:-35.0px;width:200px;text-align:center;top:198.7px;color:#1b3a8e;-webkit-text-stroke-width:0">Year</span>
<span class="t" style="left:9.5px;width:200px;text-align:center;top:198.7px;color:#1b3a8e;-webkit-text-stroke-width:0">Age</span>
<span class="t" style="left:70.5px;width:200px;text-align:center;top:198.7px;color:#1b3a8e;-webkit-text-stroke-width:0">Income</span>
<span class="t" style="left:147.0px;width:200px;text-align:center;top:186.3px;color:#1b3a8e;-webkit-text-stroke-width:0">Spouse</span>
<span class="t" style="left:147.0px;width:200px;text-align:center;top:198.8px;color:#1b3a8e;-webkit-text-stroke-width:0">Income</span>
<span class="t" style="left:223.0px;width:200px;text-align:center;top:186.3px;color:#1b3a8e;-webkit-text-stroke-width:0">Monthly</span>
<span class="t" style="left:223.0px;width:200px;text-align:center;top:198.8px;color:#1b3a8e;-webkit-text-stroke-width:0">Income</span>
<span class="t" style="left:299.0px;width:200px;text-align:center;top:186.3px;color:#1b3a8e;-webkit-text-stroke-width:0">Spouse</span>
<span class="t" style="left:299.0px;width:200px;text-align:center;top:198.8px;color:#1b3a8e;-webkit-text-stroke-width:0">Income</span>
<span class="t" style="left:388.5px;width:200px;text-align:center;top:198.7px;color:#1b3a8e;-webkit-text-stroke-width:0">Monthly Difference</span>
<span class="t" style="left:491.0px;width:200px;text-align:center;top:198.7px;color:#1b3a8e;-webkit-text-stroke-width:0">Annual Difference</span>
<span class="t" style="left:593.0px;width:200px;text-align:center;top:186.3px;color:#1b3a8e;-webkit-text-stroke-width:0">Accumulated</span>
<span class="t" style="left:593.0px;width:200px;text-align:center;top:198.8px;color:#1b3a8e;-webkit-text-stroke-width:0">Difference</span>
<div style="left:745px;top:146px;width:17px;height:370px;background:#5b87c5;border:1px solid #3d6aa6;border-top:none;box-sizing:border-box"></div>
<div style="left:745px;top:146px;width:17px;height:18px;background:#5f8ac6;border:1px solid #3d6aa6;box-sizing:border-box"></div>
<svg style="position:absolute;left:748px;top:150px" width="11" height="7"><defs><linearGradient id="gb" x1="0" y1="0" x2="0" y2="1"><stop offset="0" stop-color="#e3ecf7"/><stop offset="1" stop-color="#bccfe8"/></linearGradient></defs><path d="M0.5 6 L5.5 0.5 L10.5 6 Z" fill="url(#gb)"/></svg>
<div style="left:746px;top:164px;width:15px;height:156px;background:linear-gradient(90deg,#eef1f5,#dde4ec 50%,#c6d3e3 51%,#c3d0e1);border:1px solid #f4f7fb;box-sizing:border-box"></div>
<div style="left:749px;top:238px;width:9px;height:1px;background:#3a6aad"></div>
<div style="left:749px;top:239px;width:9px;height:1px;background:#dfe7f1"></div>
<div style="left:749px;top:240px;width:9px;height:1px;background:#3a6aad"></div>
<div style="left:749px;top:241px;width:9px;height:1px;background:#dfe7f1"></div>
<div style="left:749px;top:242px;width:9px;height:1px;background:#3a6aad"></div>
<div style="left:749px;top:243px;width:9px;height:1px;background:#dfe7f1"></div>
<div style="left:749px;top:244px;width:9px;height:1px;background:#3a6aad"></div>
<div style="left:749px;top:245px;width:9px;height:1px;background:#dfe7f1"></div>
<svg style="position:absolute;left:748px;top:506px" width="11" height="6"><defs><linearGradient id="ga" x1="0" y1="0" x2="0" y2="1"><stop offset="0" stop-color="#e8eff8"/><stop offset="1" stop-color="#bccfe8"/></linearGradient></defs><path d="M0.5 0 L10.5 0 L5.5 5.5 Z" fill="url(#ga)"/></svg>
<div style="left:40px;top:520px;width:725px;height:28px;border-radius:4px 4px 0 0;background:linear-gradient(#4f75ae,#5a81bd 35%,#6690cc)"></div>
<span class="t" style="left:47px;top:527.6px;color:#f5f8fc;-webkit-text-stroke-width:0">Client</span>
<span class="t" style="left:89.2px;top:527.6px;color:#f5f8fc;-webkit-text-stroke-width:0">Client Retire Plan</span>
<span class="t" style="left:187.2px;top:527.6px;color:#f5f8fc;-webkit-text-stroke-width:0">Retirement Investments</span>
</body></html>
